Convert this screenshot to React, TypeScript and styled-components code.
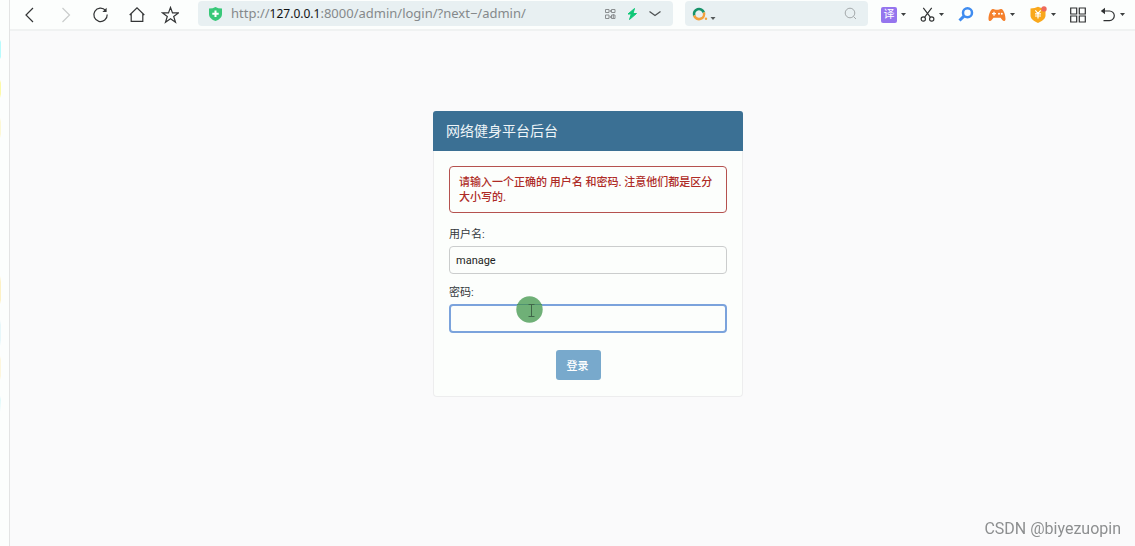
import React from "react";
import styled, { createGlobalStyle } from "styled-components";

const GlobalStyle = createGlobalStyle`
  * { box-sizing: border-box; }
  body {
    margin: 0;
    background: #fafafb;
    font-family: Roboto, "Noto Sans CJK SC", sans-serif;
    font-size: 11px;
  }
  button, input { font: inherit; color: inherit; }
  svg { display: block; flex: none; }
`;

const Shell = styled.div`
  display: grid;
  grid-template-columns: 10px minmax(0, 1fr);
  min-height: 100vh;
`;

const Edge = styled.aside`
  border-right: 1px solid #e3e4e4;
  background: linear-gradient(
      #fcfefd 40px, #b8fbfd 42px, #b8fbfd 57px, #fcfefd 59px,
      #fcfefd 80px, #fdfaa8 83px, #fdfaa8 94px, #fcfefd 98px,
      #fcfefd 118px, #fdf8d4 122px, #fdf8d4 134px, #fcfefd 138px,
      #fcfefd 276px, #fdf1c4 282px, #fdf1c4 300px, #fcfefd 304px,
      #fcfefd 320px, #e6f7fa 325px, #e6f7fa 340px, #fcfefd 346px,
      #fcfefd 356px, #fdf6dc 360px, #fdf6dc 376px, #fcfefd 380px,
      #fcfefd 396px, #dff9fa 400px, #fcfefd 412px
    ) left top / 1px 100% no-repeat #fcfefd;
`;

const Browser = styled.div`
  display: flex;
  flex-direction: column;
`;

const Toolbar = styled.header`
  display: flex;
  align-items: flex-start;
  height: 31px;
  padding: 1px 10px 0 2px;
  border-bottom: 2px solid #f0f2f2;
  background: #fcfefd;
`;

const Nav = styled.nav`
  display: flex;
  flex: none;
  width: 186px;
`;

const NavButton = styled.button<{ $faded?: boolean }>`
  display: flex;
  align-items: center;
  justify-content: center;
  width: 35px;
  height: 27px;
  padding: 0;
  border: 0;
  background: none;
  color: ${(p) => (p.$faded ? "#c9cccb" : "#333536")};
`;

const Field = styled.div`
  display: flex;
  align-items: center;
  height: 25px;
  border-radius: 4px;
  background: #e8f0f2;
`;

const AddressBar = styled(Field)`
  flex: 1;
  min-width: 0;
  gap: 9px;
  padding: 0 11px 0 11px;
`;

const Url = styled.div`
  flex: 1;
  min-width: 0;
  overflow: hidden;
  color: #85898b;
  font-family: "Noto Sans", sans-serif;
  font-size: 13px;
  line-height: 20px;
  white-space: nowrap;
`;

const Host = styled.span`
  color: #111314;
  font-size: 12px;
`;

const SearchBar = styled(Field)`
  flex: none;
  width: 183px;
  margin-left: 12px;
  padding: 0 11px 0 7px;
`;

const SearchInput = styled.input`
  flex: 1;
  min-width: 0;
  border: 0;
  outline: 0;
  background: none;
`;

const PlainButton = styled.button`
  display: flex;
  align-items: center;
  padding: 0;
  border: 0;
  background: none;
`;

const Tools = styled.div`
  display: flex;
  flex: none;
  align-items: center;
  justify-content: space-between;
  width: 244px;
  height: 27px;
  margin-left: 13px;
`;

const Tool = styled(PlainButton)`
  gap: 4px;
  color: #2f3132;
`;

const LangBadge = styled.span`
  width: 16px;
  height: 16px;
  border-radius: 2px;
  background: #9575ee;
  color: #fff;
  font-size: 11px;
  line-height: 16px;
  text-align: center;
`;

const Page = styled.main`
  flex: 1;
  padding: 80px 0 40px 31px;
`;

const Card = styled.section`
  width: 310px;
  max-width: 100%;
  margin: 0 auto;
`;

const CardTitle = styled.h1`
  margin: 0;
  padding: 0 13px;
  border-radius: 3px 3px 0 0;
  background: #3b7094;
  color: #eef5f8;
  font-size: 14px;
  font-weight: 400;
  line-height: 40px;
`;

const CardBody = styled.form`
  display: flex;
  flex-direction: column;
  padding: 15px 15px 16px;
  border: 1px solid #ededee;
  border-top: 0;
  border-radius: 0 0 4px 4px;
  background: #fcfefc;
`;

const ErrorNote = styled.p`
  margin: 0 0 14px;
  padding: 8px 9px 7px;
  border: 1px solid #b5524f;
  border-radius: 4px;
  color: #ae2b26;
  font-weight: 500;
  line-height: 15px;
`;

const Label = styled.label`
  margin-bottom: 3px;
  color: #33383c;
  line-height: 16px;
`;

const TextInput = styled.input<{ $active?: boolean }>`
  width: 100%;
  height: ${(p) => (p.$active ? "29px" : "28px")};
  margin-bottom: ${(p) => (p.$active ? "17px" : "11px")};
  padding: 0 6px;
  border: ${(p) => (p.$active ? "2px solid #7ba3dc" : "1px solid #cbcdcd")};
  border-radius: 4px;
  outline: 0;
  background: #fcfefc;
  color: #1c1f22;
`;

const PasswordWrap = styled.div`
  position: relative;
  display: flex;
`;

const Pointer = styled.svg`
  position: absolute;
  left: 67px;
  top: -8px;
`;

const Submit = styled.button`
  align-self: center;
  height: 30px;
  margin-right: 20px;
  padding: 0 12px 1px 11px;
  border: 0;
  border-radius: 3px;
  background: #78a9cc;
  color: #fff;
  font-weight: 500;
`;

const Watermark = styled.div`
  position: fixed;
  right: 14px;
  bottom: 7px;
  color: #8d8f90;
  font-family: Roboto, sans-serif;
  font-size: 16px;
  line-height: 20px;
`;

const Caret = () => (
  <svg width="5" height="3" viewBox="0 0 5 3" aria-hidden="true">
    <path d="M0 0h5L2.5 3z" fill="#3c3f40" />
  </svg>
);

const line = { fill: "none", stroke: "currentColor", strokeWidth: 1.2 };

export default function App() {
  return (
    <>
      <GlobalStyle />
      <Shell>
        <Edge />
        <Browser>
          <Toolbar>
            <Nav aria-label="浏览">
              <NavButton aria-label="后退">
                <svg width="18" height="18" viewBox="0 0 18 18" {...line}>
                  <path d="M12 2L5 9l7 7" />
                </svg>
              </NavButton>
              <NavButton aria-label="前进" $faded>
                <svg width="18" height="18" viewBox="0 0 18 18" {...line}>
                  <path d="M6.5 2l7 7-7 7" />
                </svg>
              </NavButton>
              <NavButton aria-label="刷新">
                <svg width="18" height="18" viewBox="0 0 18 18" {...line}>
                  <path d="M14.6 4.500A6.700 6.700 0 1 0 16.200 8.500" />
                  <path d="M15.600 1.800v4.200h-4.200z" fill="currentColor" stroke="none" />
                </svg>
              </NavButton>
              <NavButton aria-label="主页">
                <svg width="20" height="18" viewBox="0 0 20 18" {...line}>
                  <path d="M4.700 9L12 1.800 19.300 9M6.200 7.800v7.500h11.600V7.800" />
                </svg>
              </NavButton>
              <NavButton aria-label="收藏">
                <svg width="18" height="18" viewBox="0 0 18 18" {...line}>
                  <path d="M9.500 1.400l2 5.500h5.900l-4.700 3.500 1.800 5.800-5-3.500-5 3.500 1.800-5.800L1.600 6.900h5.900z" />
                </svg>
              </NavButton>
            </Nav>
            <AddressBar>
              <svg width="13" height="14" viewBox="0 0 13 14" aria-hidden="true">
                <path d="M0 1.500Q4 1.500 6.500 0 9 1.500 13 1.500V7c0 3.500-3 5.800-6.500 7C3 12.800 0 10.500 0 7z" fill="#38c879" />
                <path d="M6.500 3.500v6.400M3.300 6.700h6.400" stroke="#fff" strokeWidth="2" />
              </svg>
              <Url>
                http://<Host>127.0.0.1</Host>:8000/admin/login/?next−/admin/
              </Url>
              <PlainButton aria-label="二维码">
                <svg width="11" height="10" viewBox="0 0 11 10" fill="none" stroke="#8a8e90">
                  <path d="M.5.5h3.500v3H.5zM6.500.5H10v3H6.500zM.5 6H4v3.500H.5zM6.500 6H10v3.500H6.500zM8.300 5v5M5.300 1v2M5.300 7v2" />
                </svg>
              </PlainButton>
              <PlainButton aria-label="加速">
                <svg width="14" height="12" viewBox="0 0 14 12">
                  <path d="M9.500.5L3 6h3.300L4.500 11.500 11.500 5.500H8z" fill="#0fc777" stroke="#0fc777" />
                </svg>
              </PlainButton>
              <PlainButton aria-label="展开">
                <svg width="14" height="8" viewBox="0 0 14 8" fill="none" stroke="#4d5152" strokeWidth="1.3">
                  <path d="M1.500 1.500L7 5.500l5.500-4" />
                </svg>
              </PlainButton>
            </AddressBar>
            <SearchBar>
              <PlainButton type="button" aria-label="搜索引擎">
                <svg width="24" height="14" viewBox="0 0 24 14">
                  <path d="M2.200 8.500A5 5 0 1 1 11.800 5.500" fill="none" stroke="#17936a" strokeWidth="2.600" />
                  <path d="M11.900 5.500A5 5 0 0 1 2.200 8.500" fill="none" stroke="#f3a03c" strokeWidth="2.600" />
                  <circle cx="14" cy="11.800" r="1.200" fill="#f3a03c" />
                  <path d="M18.500 10h5L21 13z" fill="#55595a" />
                </svg>
              </PlainButton>
              <SearchInput type="text" aria-label="搜索" />
              <PlainButton type="button" aria-label="搜索">
                <svg width="13" height="13" viewBox="0 0 13 13" fill="none" stroke="#a3a8aa">
                  <circle cx="6" cy="6" r="4.800" />
                  <path d="M9.500 9.500l2.500 2.500" />
                </svg>
              </PlainButton>
            </SearchBar>
            <Tools>
              <Tool aria-label="翻译">
                <LangBadge>译</LangBadge>
                <Caret />
              </Tool>
              <Tool aria-label="截图">
                <svg width="15" height="15" viewBox="0 0 16 16" {...line}>
                  <path d="M3.500 1l7.500 9.800M12.500 1L5 10.800" />
                  <circle cx="3.500" cy="12.800" r="2.300" />
                  <circle cx="12.500" cy="12.800" r="2.300" />
                </svg>
                <Caret />
              </Tool>
              <Tool aria-label="查找">
                <svg width="16" height="15" viewBox="0 0 16 15" fill="none" stroke="#3f8cf0">
                  <circle cx="9.500" cy="5.800" r="4.500" strokeWidth="2.500" />
                  <path d="M6 9.200L1.500 13.500" strokeWidth="3" />
                </svg>
              </Tool>
              <Tool aria-label="游戏">
                <svg width="18" height="14" viewBox="0 0 18 14">
                  <path d="M4.500 1C6 .5 7 1.800 9 1.800S12 .5 13.500 1c2.500 1 4 6.500 4 10 0 2.300-2 2.600-3.200 1L12.500 9.800h-7L3.700 12C2.500 13.600.5 13.300.5 11c0-3.500 1.500-9 4-10z" fill="#f5802c" />
                  <path d="M6 3.700v4M4 5.700h4" stroke="#fff" strokeWidth="1.300" />
                  <circle cx="11" cy="5.700" r="1" fill="#fff" />
                  <circle cx="13.800" cy="5.700" r="1" fill="#fff" />
                </svg>
                <Caret />
              </Tool>
              <Tool aria-label="优惠">
                <svg width="17" height="18" viewBox="0 0 17 18">
                  <path d="M.5 2.500Q5 2.500 8 .8q3 1.700 7.500 1.700v7c0 3.500-3.500 5.500-7.500 7.500-4-2-7.500-4-7.500-7.500z" fill="#f9a81c" />
                  <path d="M5.300 4.300L8 7.300l2.700-3M8 7.300v5.200M5 7.800h6M5 10h6" fill="none" stroke="#fff" strokeWidth="1.200" />
                  <circle cx="14" cy="2.900" r="2.700" fill="#ee6a5c" />
                </svg>
                <Caret />
              </Tool>
              <Tool aria-label="应用">
                <svg width="16" height="16" viewBox="0 0 16 16" {...line}>
                  <path d="M.7 1h6v6h-6zM9.300 1h6v6h-6zM.7 9h6v6h-6zM9.300 9h6v6h-6z" />
                </svg>
              </Tool>
              <Tool aria-label="撤销">
                <svg width="16" height="15" viewBox="0 0 16 15" {...line}>
                  <path d="M2 4h7.500a4.800 4.800 0 0 1 0 9.600H3.500" />
                  <path d="M5 .8v6.400L.8 4z" fill="currentColor" stroke="none" />
                </svg>
                <Caret />
              </Tool>
            </Tools>
          </Toolbar>
          <Page>
            <Card>
              <CardTitle>网络健身平台后台</CardTitle>
              <CardBody onSubmit={(e) => e.preventDefault()}>
                <ErrorNote>
                  请输入一个正确的 用户名 和密码. 注意他们都是区分大小写的.
                </ErrorNote>
                <Label htmlFor="username">用户名:</Label>
                <TextInput id="username" type="text" defaultValue="manage" />
                <Label htmlFor="password">密码:</Label>
                <PasswordWrap>
                  <TextInput id="password" type="password" $active />
                  <Pointer width="27" height="27" viewBox="0 0 27 27" aria-hidden="true">
                    <circle cx="13.500" cy="13.500" r="13.200" fill="#6fb077" />
                    <path d="M1 8.500h25" stroke="#4f9270" />
                    <path d="M12.500 8.500h6M15.500 8.500v12M12.500 20.500h6" stroke="#3f6648" fill="none" />
                  </Pointer>
                </PasswordWrap>
                <Submit type="submit">登录</Submit>
              </CardBody>
            </Card>
          </Page>
        </Browser>
      </Shell>
      <Watermark>CSDN @biyezuopin</Watermark>
    </>
  );
}
